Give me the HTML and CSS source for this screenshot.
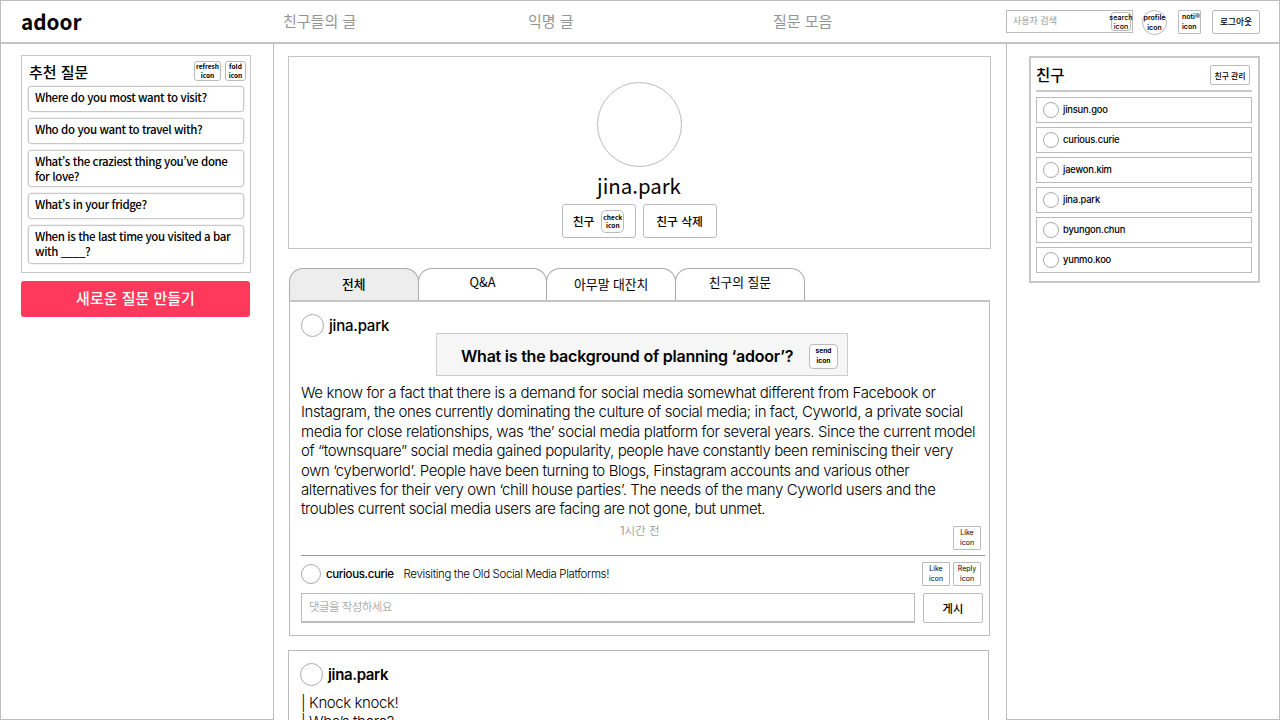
FILE: index.html
```html
<!DOCTYPE html>
<html lang="ko">
<head>
<meta charset="utf-8">
<title>adoor</title>
<link rel="stylesheet" href="styles.css">
</head>
<body>
<div class="page">
  <header class="topbar">
    <div class="logo"><span>adoor</span></div>
    <nav class="nav">
      <a class="nav-friends">친구들의 글</a>
      <a class="nav-anon">익명 글</a>
      <a class="nav-questions">질문 모음</a>
    </nav>
    <div class="tools">
      <div class="search"><span class="search-hint">사용자 검색</span><div class="ico ico-search"><span>search</span><span>icon</span></div></div>
      <div class="ico ico-profile"><span>profile</span><span>icon</span></div>
      <div class="ico ico-noti"><span>noti</span><span>icon</span><i class="dot"></i></div>
      <button class="logout">로그아웃</button>
    </div>
  </header>
  <div class="columns">
    <aside class="left">
      <section class="suggest">
        <div class="suggest-head">
          <h2>추천 질문</h2>
          <div class="ico ico-refresh"><span>refresh</span><span>icon</span></div>
          <div class="ico ico-fold"><span>fold</span><span>icon</span></div>
        </div>
        <ul class="questions">
          <li><span>Where do you most want to visit?</span></li>
          <li><span>Who do you want to travel with?</span></li>
          <li class="two"><span>What’s the craziest thing you’ve done</span><span>for love?</span></li>
          <li><span>What’s in your fridge?</span></li>
          <li class="two last"><span>When is the last time you visited a bar</span><span>with ____?</span></li>
        </ul>
      </section>
      <button class="new-question">새로운 질문 만들기</button>
    </aside>
    <main class="center">
      <section class="profile">
        <div class="avatar-xl"></div>
        <h1>jina.park</h1>
        <div class="profile-actions">
          <button class="friend">친구<span class="ico ico-check"><span>check</span><span>icon</span></span></button>
          <button class="unfriend">친구 삭제</button>
        </div>
      </section>
      <div class="tabs">
        <div class="tab on">전체</div>
        <div class="tab qna">Q&amp;A</div>
        <div class="tab">아무말 대잔치</div>
        <div class="tab ask">친구의 질문</div>
      </div>
      <article class="post">
        <div class="author"><i class="avatar"></i><span class="author-name">jina.park</span></div>
        <div class="question"><span class="question-text">What is the background of planning ‘adoor’?</span><div class="ico ico-send"><span>send</span><span>icon</span></div></div>
        <div class="body">
          <span class="first">We know for a fact that there is a demand for social media somewhat different from Facebook or</span>
          <span>Instagram, the ones currently dominating the culture of social media; in fact, Cyworld, a private social</span>
          <span>media for close relationships, was ‘the’ social media platform for several years. Since the current model</span>
          <span>of “townsquare” social media gained popularity, people have constantly been reminiscing their very</span>
          <span>own ‘cyberworld’. People have been turning to Blogs, Finstagram accounts and various other</span>
          <span>alternatives for their very own ‘chill house parties’. The needs of the many Cyworld users and the</span>
          <span>troubles current social media users are facing are not gone, but unmet.</span>
        </div>
        <div class="meta"><span class="time">1시간 전</span><div class="ico ico-sq"><span>Like</span><span>icon</span></div></div>
        <div class="comment">
          <i class="avatar avatar-sm"></i><b>curious.curie</b><span class="comment-text">Revisiting the Old Social Media Platforms!</span>
          <div class="ico ico-sq push"><span>Like</span><span>icon</span></div>
          <div class="ico ico-sq"><span>Reply</span><span>icon</span></div>
        </div>
        <div class="write"><div class="write-input">댓글을 작성하세요</div><button class="submit">게시</button></div>
      </article>
      <article class="post next">
        <div class="author"><i class="avatar"></i><span class="author-name">jina.park</span></div>
        <div class="body"><span>| Knock knock!</span><span>| Who’s there?</span></div>
      </article>
    </main>
    <aside class="right">
      <section class="friends">
        <div class="friends-head"><h2>친구</h2><button>친구 관리</button></div>
        <ul>
          <li><i></i><span>jinsun.goo</span></li>
          <li><i></i><span>curious.curie</span></li>
          <li><i></i><span>jaewon.kim</span></li>
          <li><i></i><span>jina.park</span></li>
          <li><i></i><span>byungon.chun</span></li>
          <li><i></i><span>yunmo.koo</span></li>
        </ul>
      </section>
    </aside>
  </div>
</div>
</body>
</html>
```
FILE: styles.css
```css
* { box-sizing: border-box; }
body { margin: 0; background: #fff; color: #000; font-family: "Noto Sans CJK KR", "Noto Sans", sans-serif; overflow: hidden; }
h1, h2, ul { margin: 0; padding: 0; list-style: none; }
button { font-family: inherit; color: #000; background: #fff; padding: 0; border: 1px solid #bbb; border-radius: 2px; white-space: nowrap; }
.page { width: 1280px; height: 720px; border: 1px solid #bdbdbd; border-bottom: 0; display: flex; flex-direction: column; overflow: hidden; }

.topbar { height: 43px; flex: none; border-bottom: 2px solid #c4c4c4; display: flex; align-items: flex-start; }
.logo { width: 282px; padding-left: 20px; font-size: 20.7px; font-weight: 700; line-height: 40px; }
.nav { width: 723px; display: flex; font-size: 15px; line-height: 40px; color: #949494; white-space: nowrap; }
.nav-friends { width: 245px; }
.nav-anon { width: 245px; }
.tools { display: flex; align-items: flex-start; padding-top: 9px; }
.search { width: 127px; height: 23px; border: 1px solid #bbb; display: flex; justify-content: space-between; padding-left: 6px; font-size: 9px; line-height: 20px; color: #999; }

.ico { flex: none; display: flex; flex-direction: column; align-items: center; justify-content: center; border: 1px solid #bbb; border-radius: 3px; color: #000; background: #fff; font-size: 6.6px; line-height: 9px; font-weight: 700; white-space: nowrap; position: relative; }
.ico-search { width: 20px; height: 19px; margin: 1px 1px 0 0; font-family: Inter, sans-serif; font-weight: 500; font-size: 7.2px; }
.ico-profile { width: 25px; height: 25px; border-radius: 50%; margin-left: 9px; font-family: Inter, sans-serif; font-size: 7px; font-weight: 600; line-height: 10px; }
.ico-noti { width: 23px; height: 24px; border-radius: 1px; margin-left: 11px; font-family: Inter, sans-serif; font-size: 7px; font-weight: 600; line-height: 10px; align-items: flex-start; padding-left: 3px; }
.dot { position: absolute; right: 0; top: 2px; width: 5px; height: 5px; border-radius: 50%; background: #999; }
.logout { width: 48px; height: 24px; margin-left: 11px; font-size: 8.7px; font-weight: 500; line-height: 20px; }

.columns { flex: 1; display: flex; min-height: 0; }
.left { width: 273px; border-right: 1px solid #bdbdbd; border-bottom: 1px solid #bdbdbd; padding: 11px 0 0 20px; }
.suggest { width: 230px; height: 218px; border: 1px solid #c8c8c8; padding: 5px 6px; }
.suggest-head { display: flex; height: 25px; align-items: flex-start; padding-left: 1px; }
.suggest-head h2 { flex: none; width: 165px; font-size: 15px; line-height: 22px; font-weight: 500; white-space: nowrap; }
.ico-refresh { width: 27px; height: 20px; }
.ico-fold { width: 21px; height: 20px; margin-left: 4px; }
.questions { display: flex; flex-direction: column; gap: 6px; }
.questions li { height: 26px; width: 216px; border: 1px solid #c8c8c8; border-radius: 3px; box-shadow: 0 0 0 .3px #ccc; padding: 3px 6px; font-size: 11.5px; letter-spacing: -.4px; line-height: 15px; font-weight: 500; }
.questions li.two { height: 37px; }
.questions li.last { height: 39px; }
.questions span { display: block; white-space: nowrap; }
.new-question { display: block; width: 229px; height: 36px; margin-top: 8px; border: 0; border-radius: 3px; background: #ff395b; color: #fff; font-size: 15px; font-weight: 500; line-height: 32px; padding-bottom: 2px; }

.center { width: 733px; border-right: 1px solid #bdbdbd; padding: 12px 0 0 14px; }
.profile { width: 703px; height: 193px; border: 1px solid #c4c4c4; display: flex; flex-direction: column; align-items: center; padding: 25px 1px 0 0; }
.avatar-xl { width: 85px; height: 85px; border: 1px solid #bbb; border-radius: 50%; }
.profile h1 { font-size: 20.4px; line-height: 30px; font-weight: 400; margin-top: 3px; }
.profile-actions { display: flex; gap: 7px; margin-top: 4px; }
.profile-actions button { width: 74px; height: 34px; border-radius: 3px; font-size: 11.8px; font-weight: 500; line-height: 30px; display: flex; align-items: center; justify-content: center; }
.ico-check { width: 23px; height: 23px; border-radius: 5px; line-height: 8px; margin-left: 7px; }
.tabs { display: flex; margin: 19px 0 0 1px; height: 32px; }
.tab { width: 129.7px; margin-right: -1px; border: 1px solid #aaa; border-bottom: 0; border-radius: 14px 14px 0 0; text-align: center; font-size: 12.8px; line-height: 29px; }
.tab.on { background: #ededed; font-weight: 500; }
.tab.qna, .tab.ask { line-height: 26px; }
.post { width: 701px; height: 336px; margin-left: 1px; border: 1px solid #bbb; border-top: 2px solid #c4c4c4; padding: 11px 4px 0 11px; font-family: Inter, "Noto Sans CJK KR", sans-serif; }
.author { display: flex; align-items: center; height: 24px; font-size: 15px; font-weight: 500; letter-spacing: -.2px; }
.avatar { flex: none; width: 23px; height: 23px; border: 1px solid #aaa; border-radius: 50%; margin-right: 5px; }
.question { width: 412px; height: 43px; margin: -4px 0 0 135px; border: 1px solid #ccc; background: #f6f6f6; display: flex; align-items: center; padding: 3px 0 0 24px; font-size: 16px; font-weight: 600; letter-spacing: -.23px; white-space: nowrap; }
.question-text { flex: none; width: 348px; }
.ico-send { width: 29px; height: 25px; border-radius: 4px; line-height: 10px; letter-spacing: 0; }
.body { display: flex; flex-direction: column; margin-top: 7px; font-size: 15px; letter-spacing: -.41px; line-height: 19.4px; font-weight: 300; }
.body span { white-space: nowrap; }
.body .first { letter-spacing: -.38px; }
.meta { height: 37px; border-bottom: 1px solid #999; display: flex; justify-content: flex-end; padding: 7px 4px 0 0; }
.time { width: 333px; font-size: 11.5px; font-weight: 300; line-height: 12px; color: #777; margin-top: -1px; }
.ico-sq { width: 28px; height: 24px; border-radius: 1px; font-weight: 400; font-size: 7px; line-height: 10px; letter-spacing: 0; }
.comment { display: flex; align-items: center; height: 36px; padding-right: 4px; font-size: 11.5px; letter-spacing: -.37px; white-space: nowrap; font-weight: 300; }
.comment b { font-weight: 500; margin-right: 10px; }
.avatar-sm { width: 20px; height: 20px; }
.comment .push { margin-left: auto; margin-right: 3px; }
.write { display: flex; gap: 8px; margin-top: 1px; }
.write-input { width: 614px; height: 30px; border: 1px solid #bbb; border-bottom-width: 2px; padding-left: 7px; font-size: 11.5px; letter-spacing: -.55px; line-height: 27px; font-weight: 300; color: #888; }
.submit { width: 60px; height: 30px; font-size: 11.3px; font-weight: 500; }
.post.next { margin: 14px 0 0; width: 701px; border-top: 1px solid #bbb; padding-left: 11px; }
.next .author { font-weight: 600; letter-spacing: -.35px; }
.next .body { margin-top: 7px; padding-left: 1px; }

.right { flex: 1; border-bottom: 1px solid #bdbdbd; padding: 12px 0 0 22px; }
.friends { width: 231px; height: 227px; border: 2px solid #c8c8c8; padding: 7px 6px 0 5px; font-family: Inter, "Noto Sans CJK KR", sans-serif; }
.friends-head { height: 27px; border-bottom: 2px solid #c8c8c8; display: flex; justify-content: space-between; align-items: flex-start; }
.friends h2 { font-size: 15.5px; line-height: 22px; font-weight: 500; }
.friends button { width: 40px; height: 20px; margin-right: 2px; font-size: 7.9px; font-weight: 500; }
.friends ul { display: flex; flex-direction: column; gap: 4px; margin-top: 5px; }
.friends li { width: 216px; height: 26px; border: 1px solid #bbb; display: flex; align-items: center; padding: 0 0 1px 6px; font-size: 9.4px; letter-spacing: -.2px; font-weight: 500; }
.friends i { width: 16px; height: 16px; border: 1px solid #aaa; border-radius: 50%; margin-right: 4px; }
```
